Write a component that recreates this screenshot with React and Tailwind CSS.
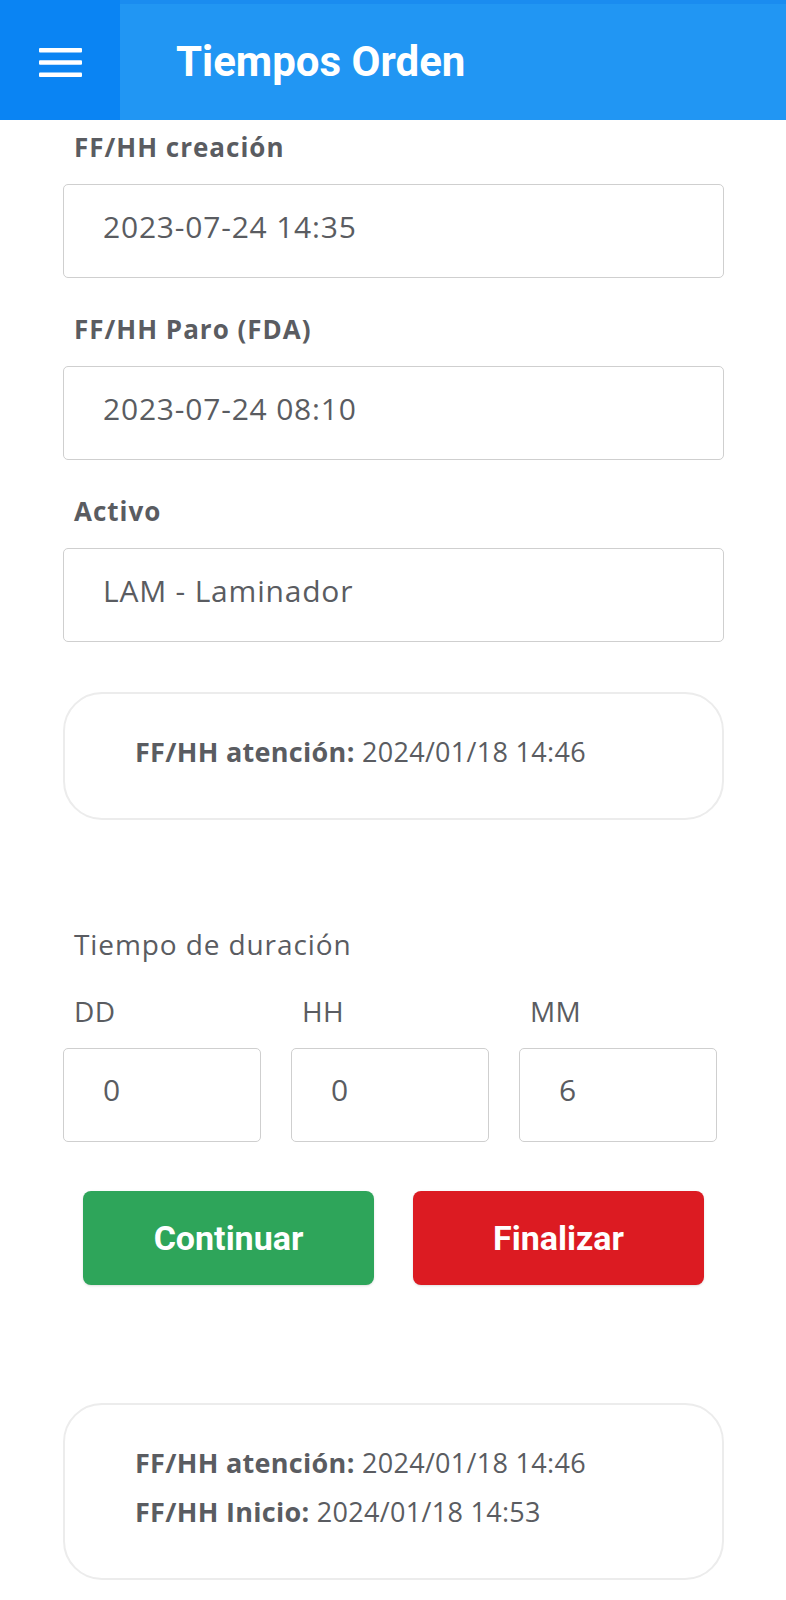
import React from "react";

const body = { fontFamily: '"Open Sans", "Noto Sans", sans-serif' };

const Field = ({ label, value, className = "" }) => (
  <div className={"flex flex-col " + className}>
    <label className="pl-[11px] text-[26px] font-bold tracking-[1px] text-[#5a5c61] leading-[34px]">{label}</label>
    <div className="mt-[20px] h-[94px] border border-[#cfcfcf] rounded-[5px] flex items-center pl-[39px] pb-[10px] text-[30px] tracking-[0.8px] text-[#5a5c61]">
      {value}
    </div>
  </div>
);

const InfoCard = ({ rows, className }) => (
  <div className={"border-2 border-[#ececec] rounded-[39px] pl-[70px] pb-[9px] flex flex-col justify-center gap-[13px] " + className}>
    {rows.map((r) => (
      <p key={r.k} className="text-[27px] tracking-[0.3px] text-[#5a5c61] leading-[36px]">
        <span className="font-bold">{r.k}</span> {r.v}
      </p>
    ))}
  </div>
);

const SmallBox = ({ label, value }) => (
  <div className="flex flex-col w-[198px]">
    <span className="pl-[11px] text-[28px] tracking-[0.4px] text-[#5a5c61] leading-[36px]">{label}</span>
    <div className="mt-[19px] h-[94px] border border-[#cfcfcf] rounded-[5px] flex items-center pl-[39px] pb-[12px] text-[30px] text-[#5a5c61]">
      {value}
    </div>
  </div>
);

export default function App() {
  return (
    <div className="min-h-screen bg-white" style={body}>
      {/* Header */}
      <header className="h-[120px] flex bg-[#2196f3]">
        <div className="w-[120px] bg-[#0a84f3] flex items-center justify-center">
          <svg width="43" height="29" viewBox="0 0 43 29" className="mt-[4px]">
            <rect x="0" y="0" width="43" height="4.5" rx="1" fill="white" />
            <rect x="0" y="12.2" width="43" height="4.5" rx="1" fill="white" />
            <rect x="0" y="24.5" width="43" height="4.5" rx="1" fill="white" />
          </svg>
        </div>
        <div className="flex-1 border-t-4 border-[#1a8cf0] flex items-center">
          <h1 className="pl-[56px] text-[42px] font-bold text-white leading-none" style={{ fontFamily: 'Roboto, sans-serif' }}>
            Tiempos Orden
          </h1>
        </div>
      </header>

      <main className="pl-[63px] pb-[40px]">
        <div className="pt-[10px] w-[661px] flex flex-col gap-[34px]">
          <Field label="FF/HH creación" value="2023-07-24 14:35" />
          <Field label="FF/HH Paro (FDA)" value="2023-07-24 08:10" />
          <Field label="Activo" value="LAM - Laminador" />
        </div>

        <InfoCard className="mt-[50px] w-[661px] h-[128px]" rows={[{ k: "FF/HH atención:", v: "2024/01/18 14:46" }]} />

        <p className="mt-[106px] pl-[11px] text-[28px] tracking-[0.9px] text-[#5a5c61] leading-[36px]">Tiempo de duración</p>

        <div className="mt-[31px] flex gap-[30px]">
          <SmallBox label="DD" value="0" />
          <SmallBox label="HH" value="0" />
          <SmallBox label="MM" value="6" />
        </div>

        <div className="mt-[49px] flex gap-[39px] pl-[20px]" style={{ fontFamily: 'Roboto, sans-serif' }}>
          <button className="w-[291px] h-[94px] rounded-[8px] bg-[#2ea55a] text-white text-[34px] font-bold shadow-sm">
            Continuar
          </button>
          <button className="w-[291px] h-[94px] rounded-[8px] bg-[#dc1b22] text-white text-[34px] font-bold shadow-sm">
            Finalizar
          </button>
        </div>

        <InfoCard
          className="mt-[118px] w-[661px] h-[177px]"
          rows={[
            { k: "FF/HH atención:", v: "2024/01/18 14:46" },
            { k: "FF/HH Inicio:", v: "2024/01/18 14:53" },
          ]}
        />
      </main>
    </div>
  );
}
